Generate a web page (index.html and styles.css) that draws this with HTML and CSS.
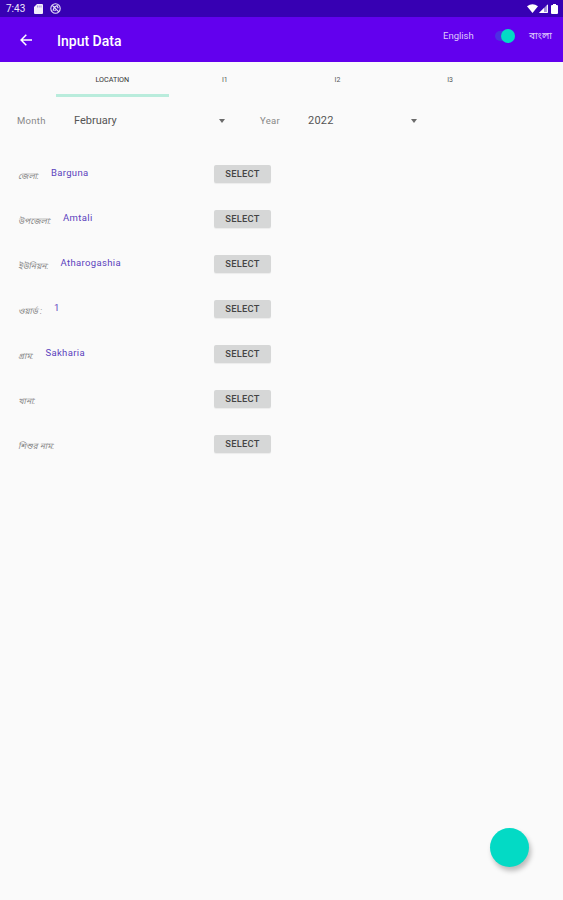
FILE: index.html
```html
<!DOCTYPE html>
<html lang="en">
<head>
  <meta charset="UTF-8" />
  <meta name="viewport" content="width=device-width, initial-scale=1.0"/>
  <title>Input Data</title>
  <link rel="stylesheet" href="styles.css">
</head>
<body>

  <div class="status-bar">
    <span class="clock">7:43</span>
    <svg class="sd-icon" width="9" height="10" viewBox="0 0 9 10"><path d="M3 0h5q1 0 1 1v8q0 1-1 1H1q-1 0-1-1V3z" fill="#f1edfb"/><path d="M3.5 1.5v2M5.2 1.5v2M7 1.5v2" stroke="#3700b3" stroke-width=".4"/></svg>
    <svg class="sync-icon" width="11" height="11" viewBox="0 0 11 11" fill="none" stroke="#e5dff6"><circle cx="5.5" cy="5.5" r="4.7" stroke-width="1.1"/><path d="M2.3 2.3l6.5 6.5M3 7.8l1.2-3.4L7 2.6l1.2 2.6M4.5 7.8l2-1.6" stroke-width="1.2"/></svg>
    <div class="signals">
      <svg width="11" height="9" viewBox="0 0 11 9"><path d="M0 2.3Q5.5-2 11 2.3L5.5 9z" fill="#fff"/></svg>
      <svg width="9" height="9" viewBox="0 0 9 9"><path d="M9 0v9H0z" fill="#a795dc"/><path d="M5 4v5H0z" fill="#fff"/><path d="M8.4 1v7.5H1" fill="none" stroke="#fff"/></svg>
      <svg class="battery" width="7" height="10" viewBox="0 0 7 10"><path d="M2 0h3v1h1q1 0 1 1v7q0 1-1 1H1q-1 0-1-1V2q0-1 1-1h1z" fill="#fff"/></svg>
    </div>
  </div>

  <header>
    <svg class="back" width="12" height="12" viewBox="0 0 12 12" fill="none" stroke="#fff" stroke-width="1.5"><path d="M12 6H1.2M6.3.8L1.1 6l5.2 5.2"/></svg>
    <h1>Input Data</h1>
    <div class="language">
      <span class="english">English</span>
      <span class="switch"><span class="thumb"></span></span>
      <span class="bangla" lang="bn">বাংলা</span>
    </div>
  </header>

  <nav>
    <a class="tab active">LOCATION</a>
    <a class="tab">I1</a>
    <a class="tab">I2</a>
    <a class="tab">I3</a>
  </nav>

  <main>
    <div class="period">
      <span class="period-label">Month</span>
      <div class="spinner month">February<i class="arrow"></i></div>
      <span class="period-label year-label">Year</span>
      <div class="spinner year">2022<i class="arrow"></i></div>
    </div>

    <div class="row"><div class="field"><span class="label" lang="bn">জেলা:</span><span class="value">Barguna</span></div><button>SELECT</button></div>
    <div class="row"><div class="field"><span class="label" lang="bn">উপজেলা:</span><span class="value">Amtali</span></div><button>SELECT</button></div>
    <div class="row"><div class="field"><span class="label" lang="bn">ইউনিয়ন:</span><span class="value">Atharogashia</span></div><button>SELECT</button></div>
    <div class="row"><div class="field"><span class="label" lang="bn">ওয়ার্ড :</span><span class="value">1</span></div><button>SELECT</button></div>
    <div class="row"><div class="field"><span class="label" lang="bn">গ্রাম:</span><span class="value">Sakharia</span></div><button>SELECT</button></div>
    <div class="row"><div class="field"><span class="label" lang="bn">খানা:</span></div><button>SELECT</button></div>
    <div class="row"><div class="field"><span class="label" lang="bn">শিশুর নাম:</span></div><button>SELECT</button></div>
  </main>

  <div class="fab"></div>

</body>
</html>
```

FILE: styles.css
```css
* {
  margin: 0;
  padding: 0;
  box-sizing: border-box;
}

body {
  font-family: Roboto, "Noto Sans", "Noto Sans Bengali", sans-serif;
  background: #fafafa;
  height: 900px;
  overflow: hidden;
}

.status-bar {
  display: flex;
  align-items: center;
  height: 17px;
  padding: 0 5px 0 6px;
  background: #3700b3;
  color: #eee9fb;
}

.clock {
  width: 28px;
  font-size: 10px;
  line-height: 19px;
}

.sync-icon {
  margin-left: 7px;
}

.signals {
  display: flex;
  align-items: center;
  gap: 1px;
  margin-left: auto;
}

.battery {
  margin-left: 2px;
}

header {
  display: flex;
  height: 45px;
  padding-left: 20px;
  background: #6200ee;
  color: white;
}

.back {
  margin-top: 17px;
}

h1 {
  margin-left: 25px;
  font-size: 14px;
  line-height: 48px;
  font-weight: 500;
}

.language {
  display: flex;
  align-items: center;
  height: 37px;
  margin-left: auto;
  padding-right: 11px;
  font-size: 9.5px;
  color: #dfc9fc;
}

.english {
  width: 52px;
}

.switch {
  display: flex;
  justify-content: flex-end;
  align-items: center;
  width: 20px;
  height: 10px;
  border-radius: 5px;
  background: #4c2fe2;
}

.thumb {
  flex-shrink: 0;
  width: 14px;
  height: 14px;
  border-radius: 50%;
  background: #03dac5;
}

.bangla {
  width: 23px;
  margin-left: 14px;
  padding-top: 1px;
  font-size: 10px;
  white-space: nowrap;
}

nav {
  display: flex;
  height: 35px;
  padding-left: 56px;
}

.tab {
  width: 112.6px;
  font-size: 7px;
  line-height: 36px;
  text-align: center;
  color: #555;
}

.active {
  height: 35px;
  border-bottom: 3px solid #b9ecdc;
  font-size: 7.2px;
  color: #333;
}

.period {
  display: flex;
  align-items: center;
  height: 47px;
  padding-left: 17px;
  margin-bottom: 7px;
}

.period-label {
  width: 57px;
  font-size: 9.5px;
  letter-spacing: 0.3px;
  color: #888;
}

.year-label {
  width: 48px;
  margin-left: 35px;
}

.spinner {
  display: flex;
  justify-content: space-between;
  align-items: center;
  font-size: 11px;
  color: #555;
}

.month {
  width: 151px;
}

.year {
  width: 109px;
  letter-spacing: 0.2px;
}

.arrow {
  border: 3.5px solid transparent;
  border-top: 4px solid #6b6b6b;
  border-bottom: 0;
}

.row {
  display: flex;
  align-items: center;
  height: 45px;
  padding-left: 18px;
}

.field {
  display: flex;
  gap: 12px;
  width: 196px;
  height: 20px;
  white-space: nowrap;
}

.label {
  padding-top: 3px;
  font-size: 8.5px;
  line-height: 18px;
  font-style: italic;
  color: #888;
}

.value {
  font-size: 9.5px;
  line-height: 17px;
  letter-spacing: 0.35px;
  color: #5b42bd;
}

button {
  width: 57px;
  height: 18px;
  border: none;
  border-radius: 2px;
  background: #d6d7d7;
  box-shadow: 0 1px 1px rgba(0, 0, 0, 0.06);
  font-family: Roboto, sans-serif;
  font-size: 9.3px;
  font-weight: 500;
  letter-spacing: 0.3px;
  color: #444;
}

.fab {
  position: absolute;
  right: 34px;
  bottom: 33px;
  width: 39px;
  height: 39px;
  border-radius: 50%;
  background: #03dac5;
  box-shadow: 2px 4px 5px rgba(0, 0, 0, 0.25);
}
```
